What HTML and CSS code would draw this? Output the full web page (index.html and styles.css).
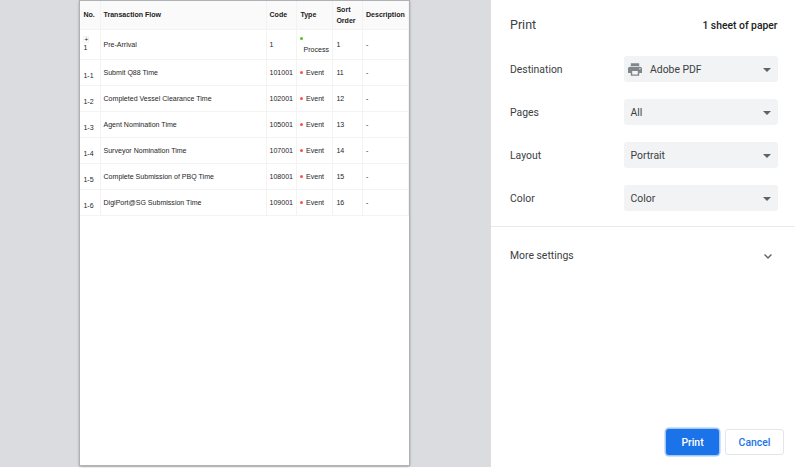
FILE: index.html
```html
<!DOCTYPE html>
<html lang="en">
<head>
<meta charset="utf-8">
<title>Print</title>
<link rel="stylesheet" href="styles.css">
</head>
<body>
<main class="dialog">
  <section class="preview">
    <div class="sheet">
      <div class="row head"><div>No.</div><div>Transaction Flow</div><div>Code</div><div>Type</div><div>Sort<br>Order</div><div>Description</div></div>
      <div class="row process"><div class="no"><span class="expand">+</span><span>1</span></div><div>Pre-Arrival</div><div>1</div><div class="type"><i class="dot green"></i><span>Process</span></div><div>1</div><div>-</div></div>
      <div class="row"><div class="no">1-1</div><div>Submit Q88 Time</div><div>101001</div><div class="type"><i class="dot"></i>Event</div><div>11</div><div>-</div></div>
      <div class="row"><div class="no">1-2</div><div>Completed Vessel Clearance Time</div><div>102001</div><div class="type"><i class="dot"></i>Event</div><div>12</div><div>-</div></div>
      <div class="row"><div class="no">1-3</div><div>Agent Nomination Time</div><div>105001</div><div class="type"><i class="dot"></i>Event</div><div>13</div><div>-</div></div>
      <div class="row"><div class="no">1-4</div><div>Surveyor Nomination Time</div><div>107001</div><div class="type"><i class="dot"></i>Event</div><div>14</div><div>-</div></div>
      <div class="row"><div class="no">1-5</div><div>Complete Submission of PBQ Time</div><div>108001</div><div class="type"><i class="dot"></i>Event</div><div>15</div><div>-</div></div>
      <div class="row"><div class="no">1-6</div><div>DigiPort@SG Submission Time</div><div>109001</div><div class="type"><i class="dot"></i>Event</div><div>16</div><div>-</div></div>
    </div>
  </section>
  <aside class="panel">
    <header class="top"><h1>Print</h1><span class="count">1 sheet of paper</span></header>
    <div class="settings">
      <div class="setting"><span>Destination</span><div class="select destination"><svg class="printer" viewBox="2 3 20 18"><path d="M19 8H5c-1.660 0-3 1.340-3 3v6h4v4h12v-4h4v-6c0-1.660-1.340-3-3-3zm-3 11H8v-5h8v5zm3-7c-.55 0-1-.45-1-1s.45-1 1-1 1 .45 1 1-.45 1-1 1zm-1-9H6v4h12V3z"/></svg><span>Adobe PDF</span><svg class="arrow" viewBox="0 0 8 4"><path d="M0 0h8L4 4z"/></svg></div></div>
      <div class="setting"><span>Pages</span><div class="select"><span>All</span><svg class="arrow" viewBox="0 0 8 4"><path d="M0 0h8L4 4z"/></svg></div></div>
      <div class="setting"><span>Layout</span><div class="select"><span>Portrait</span><svg class="arrow" viewBox="0 0 8 4"><path d="M0 0h8L4 4z"/></svg></div></div>
      <div class="setting"><span>Color</span><div class="select"><span>Color</span><svg class="arrow" viewBox="0 0 8 4"><path d="M0 0h8L4 4z"/></svg></div></div>
    </div>
    <div class="more"><span>More settings</span><svg class="chevron" viewBox="0 0 8 5"><path d="M.6.6 4 4 7.400.6"/></svg></div>
    <footer class="actions"><button class="print">Print</button><button class="cancel">Cancel</button></footer>
  </aside>
</main>
</body>
</html>
```
FILE: styles.css
```css
* { box-sizing: border-box; }
body { margin: 0; background: #fff; overflow: hidden; }

.dialog { display: flex; width: 795px; height: 468px; }

.preview {
  width: 490.5px;
  height: 467px;
  padding: 1px 0 0 80px;
  background: #dadce0;
}
.sheet {
  width: 329px;
  height: 464px;
  background: #fff;
  box-shadow: 0 0 1px 1px #b0b1b4, 0 1px 3px #85868a;
  font: 7.050px/11px "Liberation Sans", Arial, sans-serif;
  color: #262626;
}
.row {
  display: grid;
  grid-template-columns: 20.500px 166px 30.500px 36px 30px 46px;
  height: 26.080px;
}
.row > div {
  display: flex;
  align-items: center;
  padding: 0 0 1px 3.400px;
  border-right: 1px solid #f3f3f3;
  border-bottom: 1px solid #f3f3f3;
  white-space: nowrap;
}
.row > div:nth-child(2) { padding-left: 3px; }
.row > div:nth-child(3), .row > div:last-child { padding-left: 3px; }
.head { height: 29px; }
.head > div { background: #fafafa; font-weight: 700; color: #222; }
.process { height: 30px; }
.row > .no { padding: 6px 0 0 3.400px; }
.process > .no {
  flex-direction: column;
  align-items: flex-start;
  justify-content: center;
  padding: 0 0 1px 3.400px;
  line-height: 9px;
}
.expand {
  display: flex;
  justify-content: center;
  width: 6px;
  height: 7px;
  border: 1px solid #f3f3f3;
  line-height: 5px;
}
.dot { flex: none; width: 3px; height: 3px; margin: 1px 2.500px 0 .1px; border-radius: 50%; background: #ff4d4f; }
.green { background: #52c41a; margin: 0 0 4px .4px; }
.process > .type {
  flex-direction: column;
  align-items: flex-start;
  justify-content: center;
  padding: 2px 0 0 3px;
}
.type > span { padding-left: 3.500px; }

.panel {
  flex: 1;
  display: flex;
  flex-direction: column;
  height: 467px;
  font: 10.400px/16px Roboto, sans-serif;
  color: #3c4043;
}
.top {
  display: flex;
  justify-content: space-between;
  align-items: center;
  height: 50px;
  padding: 1px 17.500px 0 19.500px;
}
h1 { margin: 0 0 1px; font-size: 12.500px; font-weight: 400; }
.count { font-size: 10.350px; font-weight: 500; color: #202124; }
.settings {
  display: flex;
  flex-direction: column;
  gap: 17px;
  height: 177px;
  padding: 6px 17.500px 0 19.500px;
  border-bottom: 1px solid #e8eaed;
}
.setting { display: flex; justify-content: space-between; align-items: center; height: 26px; }
.setting span { padding-top: 1px; }
.select {
  display: flex;
  align-items: center;
  width: 153.500px;
  height: 26px;
  padding: 0 6.500px;
  border-radius: 3px;
  background: #f1f3f4;
}
.destination { padding-left: 4px; }
.printer { width: 14px; height: 13px; margin-right: 8px; fill: #80868b; }
.arrow { width: 8px; height: 4px; margin: 1px 0 0 auto; fill: #5f6368; }
.more {
  display: flex;
  justify-content: space-between;
  align-items: center;
  height: 58px;
  padding: 0 23px 0 19.500px;
}
.chevron { width: 8px; height: 5px; fill: none; stroke: #5f6368; stroke-width: 1.400; }
.actions {
  display: flex;
  justify-content: flex-end;
  gap: 6px;
  margin-top: auto;
  padding: 0 11px 12px 0;
}
button {
  height: 26px;
  padding: 1px 0 0;
  border-radius: 3px;
  font: 500 10.400px/16px Roboto, sans-serif;
}
.print { width: 53px; border: 0; background: #1a73e8; color: #fff; box-shadow: 0 0 0 1.500px #a3c7f6; }
.cancel { width: 59px; border: 1px solid #e3e5e8; background: #fff; color: #1a73e8; }
```
